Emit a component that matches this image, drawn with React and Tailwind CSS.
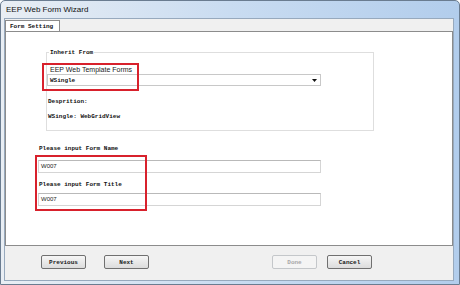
import React from 'react';

const mono = "font-['Liberation_Mono','DejaVu_Sans_Mono',monospace]";
const sans = "font-['Liberation_Sans',Arial,sans-serif]";

const Button = ({ label, disabled }) => (
  <div
    className={`w-[45px] h-[14px] flex items-center justify-center rounded-[2px] border ${mono} text-[6px] font-bold ${
      disabled
        ? 'border-[#c4c7ca] bg-[#f4f4f4] text-[#a8a8a8]'
        : 'border-[#707070] bg-gradient-to-b from-[#f6f6f6] to-[#dcdcdc] text-[#1a1a1a]'
    }`}
  >
    {label}
  </div>
);

const TextBox = ({ value }) => (
  <div className={`w-[283px] h-[13px] border border-[#d5d5d5] border-t-[#b9b9b9] bg-white flex items-center pl-[2px] ${sans} text-[6px] text-[#222]`}>
    {value}
  </div>
);

export default function App() {
  return (
    <div className="w-[460px] h-[285px] bg-white">
      <div className="w-[460px] h-[285px] flex flex-col border border-[#6a7c90] rounded-t-[5px] bg-gradient-to-r from-[#e9eef4] via-[#c9dcf1] to-[#b2cdec]">
        <div className={`h-[17px] flex items-center pl-[5px] ${sans} text-[8px] text-[#111]`}>
          EEP Web Form Wizard
        </div>

        <div className="flex-1 ml-[3px] mr-[5px] mb-[3px] bg-[#f0f0f0] border border-[#97a9bd] flex flex-col">
          {/* tab strip */}
          <div className="h-[12px] flex items-end">
            <div className={`h-[12px] w-[55px] bg-white border border-b-0 border-[#8c8c8c] flex items-center pl-[4px] ${mono} text-[6px] font-bold text-[#111] relative top-[1px]`}>
              Form Setting
            </div>
          </div>

          {/* panel */}
          <div className="flex-1 bg-white border border-[#8c8c8c] relative">
            {/* group box */}
            <div className="ml-[40px] mt-[20px] w-[328px] h-[79px] border border-[#dedede] relative">
              <div className={`absolute -top-[4px] left-[2px] bg-white px-[1px] ${mono} text-[6px] font-bold text-[#111] leading-[8px]`}>
                Inherit From
              </div>
              <div className="pt-[12px] flex flex-col">
                <div className={`pl-[3px] ${sans} text-[7px] text-[#1a1a1a] leading-[9px]`}>EEP Web Template Forms</div>
                <div className="w-[274px] h-[12px] border border-[#c8c8c8] bg-white flex items-center justify-between pl-[2px] pr-[3px]">
                  <span className={`${mono} text-[6px] font-bold text-[#111]`}>WSingle</span>
                  <svg width="5" height="3" viewBox="0 0 5 3">
                    <path d="M0 0 L5 0 L2.5 3 Z" fill="#111" />
                  </svg>
                </div>
                <div className={`pl-[1px] mt-[12px] ${mono} text-[6px] font-bold text-[#111] leading-[8px]`}>Desprition:</div>
                <div className={`pl-[1px] mt-[7px] ${mono} text-[6px] font-bold text-[#111] leading-[8px]`}>WSingle: WebGridView</div>
              </div>
            </div>

            {/* form name / title */}
            <div className="ml-[32px] mt-[14px] flex flex-col">
              <div className={`${mono} text-[6px] font-bold text-[#111] leading-[8px] pl-[1px]`}>Please input Form Name</div>
              <div className="mt-[7px]"><TextBox value="W007" /></div>
              <div className={`${mono} text-[6px] font-bold text-[#111] leading-[8px] pl-[1px] mt-[8px]`}>Please input Form Title</div>
              <div className="mt-[4px]"><TextBox value="W007" /></div>
            </div>

            {/* red highlight annotations */}
            <div className="absolute left-[36px] top-[31px] w-[97px] h-[28px] border-2 border-[#d8212c]" />
            <div className="absolute left-[29px] top-[123px] w-[112px] h-[56px] border-2 border-[#d8212c]" />
          </div>

          {/* bottom bar */}
          <div className="h-[34px] flex items-center px-[36px] pb-[2px]">
            <Button label="Previous" />
            <div className="ml-[18px]"><Button label="Next" /></div>
            <div className="ml-auto"><Button label="Done" disabled /></div>
            <div className="ml-[10px] mr-[45px]"><Button label="Cancel" /></div>
          </div>
        </div>
      </div>
    </div>
  );
}
